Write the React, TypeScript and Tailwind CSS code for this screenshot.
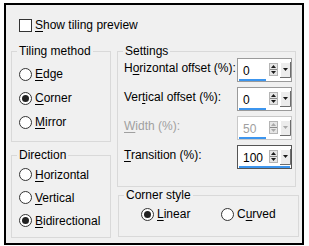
import React from "react";

function Mn({ text, at, className = "" }: { text: string; at: number; className?: string }) {
  return (
    <span className={className}>
      {text.slice(0, at)}
      <span className="underline underline-offset-[2px]">{text[at]}</span>
      {text.slice(at + 1)}
    </span>
  );
}

function Radio({ checked, text, at }: { checked?: boolean; text: string; at: number }) {
  return (
    <div className="flex items-center gap-[3px]">
      <span className="w-[13px] h-[13px] rounded-full border border-[#333] bg-white flex items-center justify-center">
        {checked && <span className="w-[7px] h-[7px] rounded-full bg-[#222]" />}
      </span>
      <Mn text={text} at={at} />
    </div>
  );
}

function SpinArrows({ disabled }: { disabled?: boolean }) {
  const c = disabled ? "#a8a8a8" : "#1a1a1a";
  return (
    <svg width="9" height="13" viewBox="0 0 9 13" className="block">
      <rect x="0.5" y="0.5" width="8" height="12" fill="#e6e6e6" stroke="#b4b4b4" />
      <line x1="1" y1="6.5" x2="8" y2="6.5" stroke="#8a8a8a" />
      <path d="M4.5 2 L7 5 L2 5 Z" fill={c} />
      <path d="M2 8 L7 8 L4.5 11 Z" fill={c} />
    </svg>
  );
}

function DropBtn({ disabled }: { disabled?: boolean }) {
  const c = disabled ? "#a8a8a8" : "#1a1a1a";
  return (
    <svg width="11" height="16" viewBox="0 0 11 16" className="block">
      <rect x="0" y="0" width="11" height="16" fill="#ececec" />
      <path d="M0.5 15.5 V0.5 H10.5" fill="none" stroke="#ffffff" />
      <path d="M0 15.5 H10.5 V0" fill="none" stroke="#6d6d6d" />
      <path d="M3 6 L8 6 L5.5 9 Z" fill={c} />
    </svg>
  );
}

function SpinBox({ value, focused, disabled }: { value: string; focused?: boolean; disabled?: boolean }) {
  return (
    <div
      className={`w-[55px] h-[24px] border bg-white flex flex-col ${
        focused ? "border-[#555]" : disabled ? "border-[#c8c8c8]" : "border-[#9a9a9a]"
      }`}
    >
      <div className="flex items-start h-[20px]">
        <span className={`pl-[5px] pt-[5px] leading-[14px] ${disabled ? "text-[#a0a0a0]" : "text-black"}`}>
          {value}
        </span>
        <div className="ml-auto flex items-start gap-[2px]">
          <div className="pt-[4px]">
            <SpinArrows disabled={disabled} />
          </div>
          <div className="pt-[3px]">
            <DropBtn disabled={disabled} />
          </div>
        </div>
      </div>
      <div className={`ml-[1px] h-[2px] bg-[#3c95ee] ${focused ? "w-[51px]" : "w-[27px]"}`} />
    </div>
  );
}

function SettingRow({ text, at, value, focused, disabled }: { text: string; at: number; value: string; focused?: boolean; disabled?: boolean }) {
  return (
    <div className="flex items-center h-[24px] pr-[3px]">
      <Mn text={text} at={at} className={`mb-[5px] ${disabled ? "text-[#a0a0a0]" : ""}`} />
      <div className="ml-auto">
        <SpinBox value={value} focused={focused} disabled={disabled} />
      </div>
    </div>
  );
}

const legend = "ml-[5px] px-[2px] leading-[14px]";

export default function App() {
  return (
    <div className="w-[309px] h-[246px] bg-white pt-[3px] pl-[4px] font-['Liberation_Sans',Arial,sans-serif] text-[12px] text-black">
      <div className="w-[300px] h-[242px] border-2 border-black bg-[#f0f0f0] pt-[12px]">
        <div className="flex items-center gap-[3px] h-[16px] pl-[13px]">
          <span className="w-[13px] h-[13px] border border-[#333] bg-white" />
          <Mn text="Show tiling preview" at={0} />
        </div>

        <div className="flex gap-[6px] mt-[11px] pl-[5px]">
          <div className="flex flex-col gap-[6px] w-[100px]">
            <fieldset className="border border-[#d9d9d9] h-[98px]">
              <legend className={legend}>Tiling method</legend>
              <div className="pt-[4px] pl-[7px]">
                <div className="h-[24px] flex items-center"><Radio text="Edge" at={0} /></div>
                <div className="h-[24px] flex items-center"><Radio text="Corner" at={0} checked /></div>
                <div className="h-[24px] flex items-center"><Radio text="Mirror" at={0} /></div>
              </div>
            </fieldset>
            <fieldset className="border border-[#d9d9d9] h-[90px]">
              <legend className={legend}>Direction</legend>
              <div className="pt-[1px] pl-[7px]">
                <div className="h-[23px] flex items-center"><Radio text="Horizontal" at={0} /></div>
                <div className="h-[23px] flex items-center"><Radio text="Vertical" at={0} /></div>
                <div className="h-[23px] flex items-center"><Radio text="Bidirectional" at={0} checked /></div>
              </div>
            </fieldset>
          </div>

          <div className="flex flex-col gap-[1px] w-[182px]">
            <fieldset className="border border-[#d9d9d9] w-[179px] h-[143px]">
              <legend className={legend}>Settings</legend>
              <div className="flex flex-col gap-[5px] pl-[6px]">
                <SettingRow text="Horizontal offset (%):" at={1} value="0" />
                <SettingRow text="Vertical offset (%):" at={3} value="0" />
                <SettingRow text="Width (%):" at={0} value="50" disabled />
                <SettingRow text="Transition (%):" at={0} value="100" focused />
              </div>
            </fieldset>
            <fieldset className="border border-[#d9d9d9] ml-[1px] w-[181px] h-[49px]">
              <legend className={legend}>Corner style</legend>
              <div className="flex items-center h-[22px] pt-[2px] pl-[22px]">
                <div className="w-[80px]"><Radio text="Linear" at={0} checked /></div>
                <Radio text="Curved" at={1} />
              </div>
            </fieldset>
          </div>
        </div>
      </div>
    </div>
  );
}
